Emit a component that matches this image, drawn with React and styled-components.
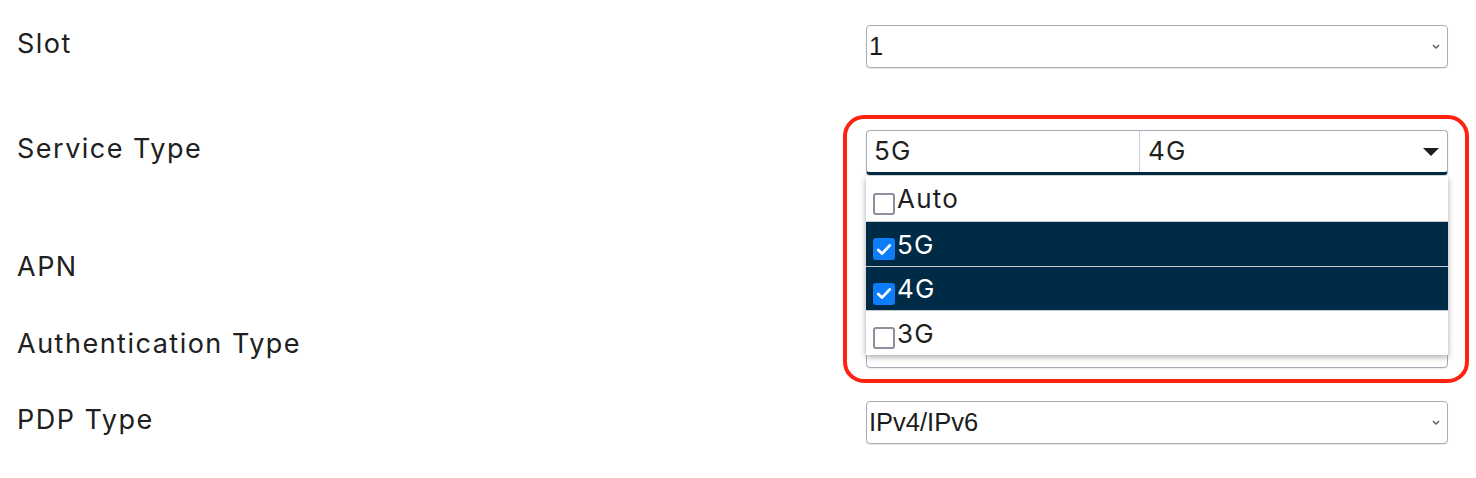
import React from "react";
import styled, { createGlobalStyle } from "styled-components";

const Global = createGlobalStyle`
  html, body { margin: 0; padding: 0; background: #ffffff; }
  body { font-family: Inter, "Noto Sans", sans-serif; color: #1f1f1f; }
`;

const Page = styled.div`
  width: 1476px;
  height: 478px;
  padding-top: 25px;
  box-sizing: border-box;
  overflow: hidden;
`;

const Row = styled.div`
  display: grid;
  grid-template-columns: 866px 582px;
  align-items: center;
  height: 43px;
  margin-top: ${(p) => p.$gap || 0}px;
`;

const Label = styled.div`
  padding-left: 17px;
  font-family: Inter, "Noto Sans", sans-serif;
  font-size: 27px;
  letter-spacing: 1.5px;
  color: #202020;
  padding-bottom: 7px;
  white-space: nowrap;
`;

const Field = styled.div`
  position: relative;
  height: 43px;
`;

const SelectBox = styled.div`
  box-sizing: border-box;
  height: 43px;
  border: 1px solid #a3aeb9;
  border-radius: 4px;
  background: #fff;
  display: flex;
  align-items: center;
  justify-content: space-between;
  padding: 0 7px 0 2px;
  font-family: "Liberation Sans", Arial, sans-serif;
  font-size: 25.5px;
  color: #1c1c1c;
  box-shadow: 0 1px 1px rgba(0, 0, 0, 0.08);
`;

const TextBox = styled.div`
  box-sizing: border-box;
  height: 43px;
  border: 1px solid #a3aeb9;
  border-radius: 4px;
  background: #fff;
`;

const Chevron = () => (
  <svg width="8" height="5" viewBox="0 0 8 5">
    <path d="M1 1 L4 4 L7 1" fill="none" stroke="#555" strokeWidth="1.3" />
  </svg>
);

const MultiBox = styled.div`
  box-sizing: border-box;
  height: 45px;
  border: 1px solid #a3aeb9;
  border-bottom: 3px solid #032a45;
  border-radius: 4px;
  background: #fff;
  display: flex;
  align-items: stretch;
  box-shadow: 0 1px 2px rgba(0, 0, 0, 0.15);
`;

const Chip = styled.div`
  box-sizing: border-box;
  display: flex;
  align-items: center;
  width: ${(p) => (p.$w ? `${p.$w}px` : "auto")};
  flex: ${(p) => (p.$w ? "none" : "1")};
  padding-left: ${(p) => p.$pl}px;
  border-right: ${(p) => (p.$divider ? "1px solid #c9d0d7" : "none")};
  font-size: 26px;
  letter-spacing: 1.2px;
  color: #1f1f1f;
  padding-bottom: 2px;
`;

const Caret = styled.div`
  width: 0;
  height: 0;
  border-left: 8.5px solid transparent;
  border-right: 8.5px solid transparent;
  border-top: 8px solid #1f1f1f;
  align-self: center;
  margin-right: 8px;
`;

const Menu = styled.div`
  position: absolute;
  top: 46px;
  left: 0;
  width: 582px;
  background: #fff;
  box-shadow: 0 2px 6px rgba(0, 0, 0, 0.35);
  z-index: 2;
`;

const Option = styled.div`
  box-sizing: border-box;
  height: ${(p) => p.$h}px;
  display: flex;
  align-items: center;
  gap: 2px;
  padding-left: 7px;
  background: ${(p) => (p.$on ? "#002b46" : "#fff")};
  color: ${(p) => (p.$on ? "#fff" : "#1f1f1f")};
  border-bottom: ${(p) => (p.$last ? "none" : "1px solid #c7c9cc")};
  font-size: 26px;
  letter-spacing: 1.2px;
`;

const Box = styled.span`
  box-sizing: border-box;
  width: 22px;
  height: 22px;
  margin-top: 10px;
  border-radius: 3px;
  border: ${(p) => (p.$on ? "none" : "2.5px solid #8e8f9c")};
  background: ${(p) => (p.$on ? "#0d7dfa" : "#fff")};
  display: inline-flex;
  align-items: center;
  justify-content: center;
  flex: none;
`;

const Highlight = styled.div`
  position: absolute;
  left: -23px;
  top: -15px;
  width: 626px;
  height: 268px;
  box-sizing: border-box;
  border: 4.5px solid #ff2211;
  border-radius: 21px;
  pointer-events: none;
  z-index: 3;
`;

const Check = () => (
  <svg width="16" height="13" viewBox="0 0 16 13">
    <path d="M2.2 7 L6 10.6 L13.8 2.4" fill="none" stroke="#fff" strokeWidth="2.8" strokeLinecap="round" strokeLinejoin="round" />
  </svg>
);

const options = [
  { label: "Auto", on: false, h: 46 },
  { label: "5G", on: true, h: 45 },
  { label: "4G", on: true, h: 44 },
  { label: "3G", on: false, h: 44, last: true },
];

export default function App() {
  return (
    <Page>
      <Global />
      <Row>
        <Label>Slot</Label>
        <Field>
          <SelectBox>
            <span>1</span>
            <Chevron />
          </SelectBox>
        </Field>
      </Row>
      <Row $gap={62}>
        <Label>Service Type</Label>
        <Field>
          <MultiBox>
            <Chip $w={273} $pl={7} $divider>5G</Chip>
            <Chip $pl={8}>4G</Chip>
            <Caret />
          </MultiBox>
          <Menu>
            {options.map((o) => (
              <Option key={o.label} $on={o.on} $h={o.h} $last={o.last}>
                <Box $on={o.on}>{o.on && <Check />}</Box>
                <span>{o.label}</span>
              </Option>
            ))}
          </Menu>
          <Highlight />
        </Field>
      </Row>
      <Row $gap={75}>
        <Label>APN</Label>
        <Field>
          <TextBox />
        </Field>
      </Row>
      <Row $gap={34}>
        <Label>Authentication Type</Label>
        <Field>
          <SelectBox>
            <span></span>
            <Chevron />
          </SelectBox>
        </Field>
      </Row>
      <Row $gap={33}>
        <Label>PDP Type</Label>
        <Field>
          <SelectBox>
            <span>IPv4/IPv6</span>
            <Chevron />
          </SelectBox>
        </Field>
      </Row>
    </Page>
  );
}
